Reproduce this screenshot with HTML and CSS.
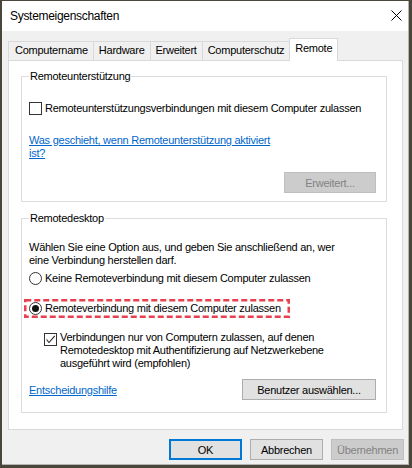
FILE: index.html
```html
<!DOCTYPE html>
<html lang="de">
<head>
  <meta charset="UTF-8">
  <title>Systemeigenschaften</title>
  <link rel="stylesheet" href="styles.css">
</head>
<body>
  <div class="window">
    <div class="titlebar">
      <span class="title">Systemeigenschaften</span>
      <svg class="close" width="11" height="11" viewBox="0 0 11 11">
        <path d="M0.5 0.5 L10.5 10.5 M10.5 0.5 L0.5 10.5" stroke="#000" stroke-width="1"/>
      </svg>
    </div>

    <div class="tabs">
      <div class="tab">Computername</div>
      <div class="tab">Hardware</div>
      <div class="tab">Erweitert</div>
      <div class="tab">Computerschutz</div>
      <div class="tab active">Remote</div>
    </div>

    <div class="panel">
      <!-- Remoteunterstützung -->
      <fieldset class="group">
        <legend>Remoteunterstützung</legend>
        <div class="option first">
          <span class="check"></span>
          <span>Remoteunterstützungsverbindungen mit diesem Computer zulassen</span>
        </div>
        <a class="link help-link" href="#">Was geschieht, wenn Remoteunterstützung aktiviert<br>ist?</a>
        <div class="actions">
          <button class="btn btn-advanced" disabled>Erweitert...</button>
        </div>
      </fieldset>

      <!-- Remotedesktop -->
      <fieldset class="group group-desktop">
        <legend>Remotedesktop</legend>
        <p class="intro">Wählen Sie eine Option aus, und geben Sie anschließend an, wer<br>eine Verbindung herstellen darf.</p>
        <div class="option radio-row">
          <span class="radio"></span>
          <span>Keine Remoteverbindung mit diesem Computer zulassen</span>
        </div>
        <div class="option radio-row highlight">
          <span class="radio selected"></span>
          <span>Remoteverbindung mit diesem Computer zulassen</span>
          <svg class="highlight-box" width="266" height="19" viewBox="0 0 266 19">
            <rect x="1.25" y="1.25" width="263.5" height="16.5" fill="none" stroke="#e8404f" stroke-width="2.5" stroke-dasharray="6 3"/>
          </svg>
        </div>
        <div class="option nla">
          <span class="check checked">
            <svg width="11" height="11" viewBox="0 0 11 11">
              <path d="M1.5 5.5 L4 8.5 L9.8 1.8" fill="none" stroke="#222" stroke-width="1.1"/>
            </svg>
          </span>
          <span class="nla-text">Verbindungen nur von Computern zulassen, auf denen<br>Remotedesktop mit Authentifizierung auf Netzwerkebene<br>ausgeführt wird (empfohlen)</span>
        </div>
        <div class="actions split">
          <a class="link" href="#">Entscheidungshilfe</a>
          <button class="btn btn-users">Benutzer auswählen...</button>
        </div>
      </fieldset>
    </div>

    <div class="footer">
      <button class="btn default">OK</button>
      <button class="btn">Abbrechen</button>
      <button class="btn" disabled>Übernehmen</button>
    </div>
  </div>
</body>
</html>
```

FILE: styles.css
```css
body {
  margin: 0;
  padding: 1px 0 0 2px;
  height: 468px;
  box-sizing: border-box;
  overflow: hidden;
  background: #4a463a;
  font-family: 'Liberation Sans', Arial, sans-serif;
  font-size: 11px;
  letter-spacing: -0.25px;
  color: #000;
}

.window {
  width: 407px;
  height: 464px;
  box-sizing: border-box;
  background: #f0f0f0;
  border-right: 1px solid #b4b4b4;
  border-bottom: 1px solid #b4b4b4;
}

.titlebar {
  height: 30px;
  background: #fff;
  display: flex;
  align-items: center;
  justify-content: space-between;
  padding: 0 6px 0 8px;
}

.title {
  font-size: 12px;
  letter-spacing: -0.3px;
}

.close {
  margin-bottom: 2px;
}

/* Reiter */
.tabs {
  display: flex;
  align-items: flex-end;
  height: 22px;
  margin-top: 7px;
  padding-left: 6px;
}

.tab {
  height: 19px;
  box-sizing: border-box;
  padding: 0 5px;
  line-height: 17px;
  border: 1px solid #d9d9d9;
  border-bottom: none;
  margin-left: -1px;
  background: #f0f0f0;
}

.tab:first-child {
  margin-left: 0;
  padding-left: 6px;
}

.tab.active {
  position: relative;
  z-index: 1;
  height: 23px;
  margin-bottom: -1px;
  line-height: 18px;
  background: #fff;
}

.panel {
  height: 370px;
  box-sizing: border-box;
  margin: 0 5px 0 6px;
  padding: 8px 15px 0 12px;
  border: 1px solid #d9d9d9;
  background: #fff;
}

/* Gruppen */
.group {
  margin: 0;
  min-width: 0;
  padding: 0 10px 8px 7px;
  border: 1px solid #dcdcdc;
}

.group legend {
  padding: 0 1px;
  line-height: 14px;
}

.group-desktop {
  margin-top: 9px;
  padding-bottom: 12px;
}

.option {
  display: flex;
  align-items: center;
  gap: 3px;
  line-height: 14px;
}

.option.first {
  margin-top: 18px;
}

.check,
.radio {
  width: 13px;
  height: 13px;
  box-sizing: border-box;
  border: 1px solid #333;
  background: #fff;
  flex: none;
}

.check.checked {
  display: flex;
  align-items: center;
  justify-content: center;
}

.radio {
  border-radius: 50%;
  display: flex;
  align-items: center;
  justify-content: center;
}

.radio.selected::after {
  content: '';
  width: 7px;
  height: 7px;
  border-radius: 50%;
  background: #111;
}

.link {
  color: #0066cc;
  text-decoration: underline;
}

.help-link {
  display: block;
  margin-top: 19px;
  line-height: 13px;
}

.actions {
  display: flex;
  justify-content: flex-end;
  margin-top: 12px;
}

.actions.split {
  justify-content: space-between;
  align-items: center;
  margin-top: 9px;
}

.intro {
  margin: 16px 0 0;
  line-height: 13px;
}

.radio-row {
  margin-top: 4px;
}

.highlight {
  position: relative;
  margin-top: 16px;
}

.highlight-box {
  position: absolute;
  left: -5px;
  top: -2px;
}

.nla {
  align-items: flex-start;
  margin: 16px 0 0 15px;
}

.nla .check {
  margin-top: 2px;
}

.nla-text {
  line-height: 13px;
}

/* Schaltflächen */
.btn {
  height: 21px;
  box-sizing: border-box;
  padding: 0;
  border: 1px solid #adadad;
  background: #e1e1e1;
  font: inherit;
  letter-spacing: inherit;
  color: #000;
}

.btn:disabled {
  background: #cccccc;
  border-color: #bfbfbf;
  color: #838383;
}

.btn-advanced {
  width: 92px;
}

.btn-users {
  width: 134px;
}

.footer {
  display: flex;
  justify-content: flex-end;
  gap: 8px;
  padding: 9px 4px 0 0;
}

.footer .btn {
  width: 73px;
}

.footer .btn.default {
  border: 2px solid #0078d7;
}
```
